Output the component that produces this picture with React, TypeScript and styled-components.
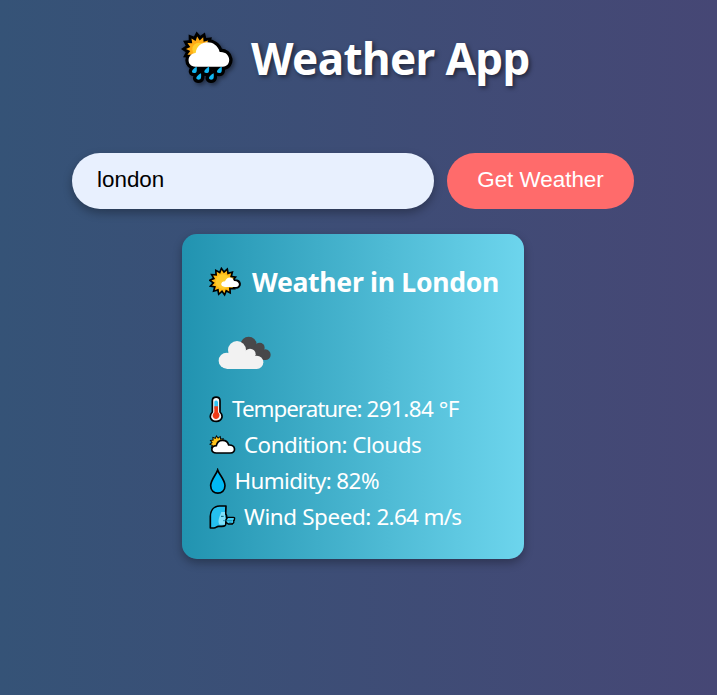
import React from "react";
import styled, { createGlobalStyle } from "styled-components";

const GlobalStyle = createGlobalStyle`
  * { box-sizing: border-box; }
  body {
    margin: 0;
    min-height: 100vh;
    background: linear-gradient(to right, #355377, #464775);
    font-family: "Segoe UI", "Noto Sans", sans-serif;
    color: #fff;
  }
`;

const Page = styled.main`
  min-height: 695px;
  padding-top: 28px;
  overflow: hidden;
`;

const Title = styled.h1`
  display: flex;
  align-items: center;
  height: 60px;
  margin: 0 0 65px 181px;
  gap: 16px;
  font-size: 44px;
  line-height: 60px;
  font-weight: 700;
  letter-spacing: -0.62px;
  white-space: nowrap;
  text-shadow: 2px 2px 4px rgba(0, 0, 0, 0.5);

  svg { filter: drop-shadow(2px 2px 2px rgba(0, 0, 0, 0.45)); }
`;

const SearchBar = styled.form`
  display: flex;
  gap: 13px;
  margin: 0 0 25px 72px;
`;

const CityInput = styled.input`
  width: 362px;
  height: 56px;
  padding: 0 25px 2px;
  border: 0;
  border-radius: 28px;
  outline: none;
  background: #e8f0fe;
  color: #000;
  font: 22.4px "Liberation Sans", Arial, sans-serif;
  box-shadow: 0 4px 10px rgba(0, 0, 0, 0.3);
`;

const SubmitButton = styled.button`
  width: 187px;
  height: 56px;
  padding: 0 0 2px;
  border: 0;
  border-radius: 28px;
  background: #ff6b6b;
  color: #fff;
  font: 22.4px "Liberation Sans", Arial, sans-serif;
  white-space: nowrap;
`;

const Card = styled.section`
  width: 342px;
  height: 325px;
  margin-left: 182px;
  padding: 28px 0 0 27px;
  border-radius: 15px;
  background: linear-gradient(to right, #2193b0, #6dd5ed);
  box-shadow: 0 4px 10px rgba(0, 0, 0, 0.3);
`;

const CardTitle = styled.h2`
  display: flex;
  align-items: center;
  height: 40px;
  margin: 0;
  gap: 10px;
  font-size: 26.6px;
  line-height: 40px;
  font-weight: 700;
  letter-spacing: -0.3px;
  white-space: nowrap;
`;

const Condition = styled.div`
  height: 36px;
  margin: 34px 0 19px 9px;
  svg { display: block; }
`;

const Row = styled.p<{ $gap: number }>`
  display: flex;
  align-items: center;
  height: 36px;
  margin: 0;
  gap: ${(p) => p.$gap}px;
  font-size: 22.4px;
  line-height: 36px;
  white-space: nowrap;
`;

const Reading = styled.span<{ $spacing: number }>`
  letter-spacing: ${(p) => p.$spacing}px;
`;

const points = (cx: number, cy: number, outer: number, inner: number, count: number) =>
  Array.from({ length: count * 2 }, (_, i) => {
    const r = i % 2 ? inner : outer;
    const a = (i * Math.PI) / count - Math.PI / 2 - 0.12;
    return `${(cx + r * Math.cos(a)).toFixed(1)},${(cy + r * Math.sin(a)).toFixed(1)}`;
  }).join(" ");

const rainCloud =
  "M76 143C49 143 49 104 77 102C82 61 139 59 149 99C184 96 187 143 158 143Z";
const drops = [[73, 153], [110, 153], [148, 153], [86, 173], [124, 173]];
const dropPath = "M7 -10C8 2 8 9 -1 9C-11 8 -9 -1 7 -10Z";

const RainIcon = () => (
  <svg width="54" height="54" viewBox="33 36 162 162">
    <polygon points={points(86, 90, 53, 40, 13)} fill="#000" />
    <g fill="#000" stroke="#000" strokeWidth="20" strokeLinejoin="round">
      <path d={rainCloud} />
      {drops.map(([x, y]) => (
        <path key={`${x}-${y}`} transform={`translate(${x} ${y})`} d={dropPath} />
      ))}
    </g>
    <polygon points={points(86, 90, 38, 26, 13)} fill="#ffac16" />
    <circle cx="87" cy="91" r="20" fill="#ffd02f" />
    <path d={rainCloud} fill="#fff" />
    {drops.map(([x, y]) => (
      <path
        key={`${x}-${y}`}
        transform={`translate(${x} ${y})`}
        d={dropPath}
        fill="#12b7f2"
      />
    ))}
  </svg>
);

const SunCloudIcon = () => (
  <svg width="33" height="30" viewBox="28 37 99 90">
    <polygon points={points(70, 81, 45, 33, 14)} fill="#000" />
    <path d="M76 97C58 96 62 79 76 80C82 61 101 65 103 79C124 78 122 97 109 97Z" fill="#000" stroke="#000" strokeWidth="10" />
    <polygon points={points(70, 81, 35, 25, 14)} fill="#ffb915" />
    <circle cx="70" cy="81" r="22" fill="#ffcc2b" />
    <path d="M76 97C60 96 62 80 76 80C82 62 101 67 103 79C121 78 122 97 109 97Z" fill="#fff" />
  </svg>
);

const CloudsIcon = () => (
  <svg width="54" height="36" viewBox="40 33 162 108">
    <g fill="#48484a">
      <circle cx="132" cy="59" r="24" />
      <circle cx="165" cy="68" r="15" />
      <circle cx="182" cy="89" r="16" />
      <path d="M125 69H175L182 105H150Z" />
    </g>
    <g fill="#f2f2f2">
      <circle cx="97" cy="75" r="27" />
      <circle cx="136" cy="88" r="17" />
      <circle cx="66" cy="107" r="24" />
      <circle cx="156" cy="112" r="20" />
      <path d="M73 76H117L151 95L156 132H66Z" />
    </g>
  </svg>
);

const ThermometerIcon = () => (
  <svg width="14" height="27" viewBox="26 18 42 81">
    <path d="M36 66V32C36 18 59 18 59 32V66C71 78 64 94 48 94C31 94 24 79 36 66Z" fill="#f5f5f5" stroke="#000" strokeWidth="5" />
    <path d="M42 35Q47 28 53 35V56H42Z" fill="#32c5f4" />
    <path d="M42 49H53V67C62 75 56 87 47 87C36 86 34 74 42 67Z" fill="#f03a17" />
  </svg>
);

const CloudSunIcon = () => (
  <svg width="27" height="21" viewBox="26 128 81 63">
    <polygon points={points(51, 153, 25, 18, 12)} fill="#000" />
    <polygon points={points(51, 153, 20, 14, 12)} fill="#ffc31c" />
    <path d="M48 182C29 182 31 161 48 160C52 139 80 139 85 158C107 157 108 182 90 182Z" fill="#fff" stroke="#000" strokeWidth="5" />
  </svg>
);

const DropletIcon = () => (
  <svg width="17" height="27" viewBox="26 24 51 81">
    <path d="M52 30C48 43 31 60 31 77C31 107 74 107 74 77C74 60 56 43 52 30Z" fill="#00b9f4" stroke="#000" strokeWidth="5" />
  </svg>
);

const WindIcon = () => (
  <svg width="27" height="26" viewBox="26 132 81 78">
    <path d="M77 138H58C38 139 30 154 30 169V204H41C47 204 49 199 54 199H64C76 199 76 195 77 187V177L79 168L76 161Z" fill="#25bfee" stroke="#000" strokeWidth="5" strokeLinejoin="round" />
    <path d="M63 156H74V172H76V179H74V194H58C51 185 56 174 63 156Z" fill="#7fe1fa" />
    <path d="M62 169H70" stroke="#075e77" strokeWidth="3" />
    <path d="M77 180L82 172H99Q105 172 102 178Q103 181 100 182Q102 190 96 191V192H84L77 187Z" fill="#42cdf3" stroke="#000" strokeWidth="4" />
    <path d="M68 182H96M86 187H94" stroke="#087a9b" strokeWidth="2" />
  </svg>
);

const readings = [
  { icon: <ThermometerIcon />, label: "Temperature: ", value: "291.84 °F", gap: 9, labelSpacing: -1, valueSpacing: -0.5 },
  { icon: <CloudSunIcon />, label: "Condition: ", value: "Clouds", gap: 8, labelSpacing: -0.53, valueSpacing: -0.5 },
  { icon: <DropletIcon />, label: "Humidity: ", value: "82%", gap: 8.5, labelSpacing: -0.62, valueSpacing: -0.5 },
  { icon: <WindIcon />, label: "Wind Speed: ", value: "2.64 m/s", gap: 8, labelSpacing: -0.38, valueSpacing: -0.65 },
];

export default function App() {
  return (
    <>
      <GlobalStyle />
      <Page>
        <Title>
          <RainIcon />
          <span>Weather App</span>
        </Title>
        <SearchBar onSubmit={(e) => e.preventDefault()}>
          <CityInput defaultValue="london" aria-label="City" />
          <SubmitButton>Get Weather</SubmitButton>
        </SearchBar>
        <Card>
          <CardTitle>
            <SunCloudIcon />
            <span>Weather in London</span>
          </CardTitle>
          <Condition>
            <CloudsIcon />
          </Condition>
          {readings.map((r) => (
            <Row key={r.label} $gap={r.gap}>
              {r.icon}
              <span>
                <Reading $spacing={r.labelSpacing}>{r.label}</Reading>
                <Reading $spacing={r.valueSpacing}>{r.value}</Reading>
              </span>
            </Row>
          ))}
        </Card>
      </Page>
    </>
  );
}
